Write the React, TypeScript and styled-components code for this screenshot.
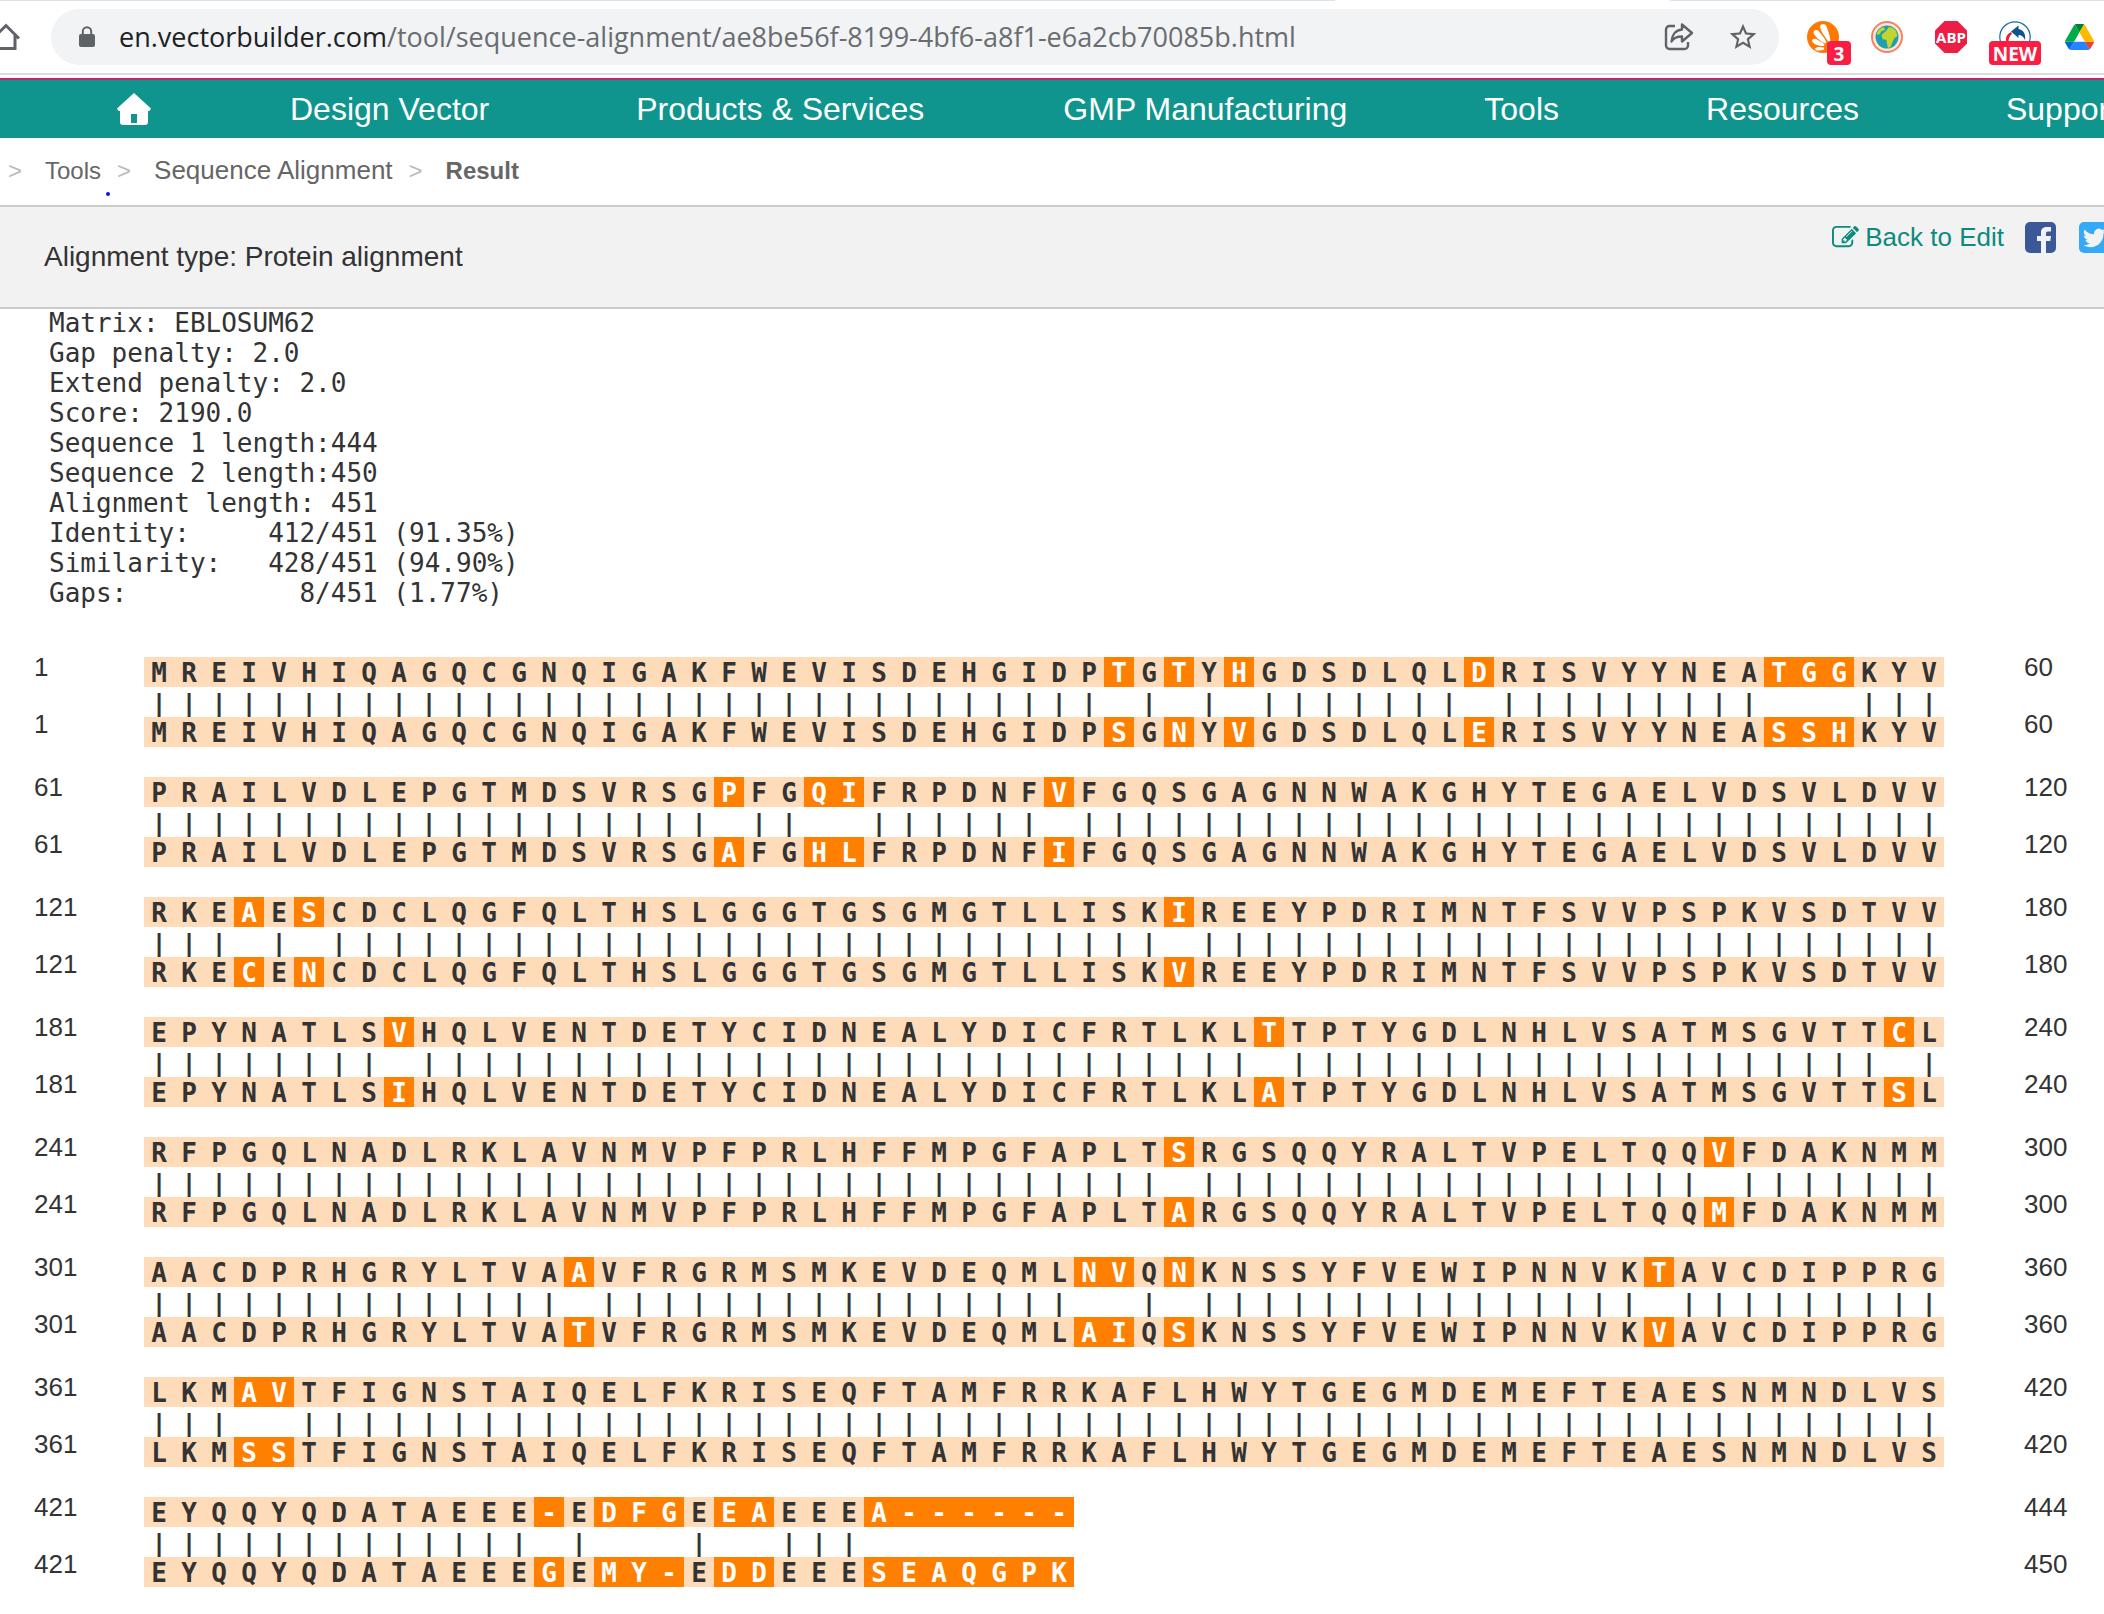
import React from "react";
import styled, { createGlobalStyle } from "styled-components";

const GlobalStyle = createGlobalStyle`
  * { box-sizing: border-box; }
  body {
    margin: 0;
    background: #fff;
    color: #333;
    font-family: "Liberation Sans", Arial, sans-serif;
    overflow-x: hidden;
  }
`;

const Page = styled.div`
  display: flex;
  flex-direction: column;
  overflow: hidden;
`;

/* ---------- browser toolbar ---------- */

const Toolbar = styled.header`
  display: flex;
  align-items: center;
  height: 75px;
  border-bottom: 2px solid #dadcdd;
  background:
    linear-gradient(#dee1e6, #dee1e6) 0 0 / 1335px 1px no-repeat,
    linear-gradient(#dee1e6, #dee1e6) 1670px 0 / 100% 1px no-repeat,
    #fff;
`;

const IconButton = styled.button`
  display: flex;
  align-items: center;
  justify-content: center;
  flex: none;
  position: relative;
  width: 32px;
  height: 32px;
  padding: 0;
  border: 0;
  background: none;
  color: #5f6368;
`;

const HomeButton = styled(IconButton)`
  width: 42px;
  margin: 0 24px 0 -15px;
`;

const AddressBar = styled.div`
  display: flex;
  align-items: center;
  flex: 1;
  height: 56px;
  padding: 0 20px 0 28px;
  border-radius: 28px;
  background: #f1f3f4;
`;

const Url = styled.div`
  flex: 1;
  margin-left: 24px;
  font: 27px/36px "Open Sans", "Noto Sans", sans-serif;
  color: #696c70;
  white-space: nowrap;
`;

const Host = styled.span`
  color: #202124;
`;

const AddressActions = styled.div`
  display: flex;
  gap: 32px;
`;

const Extensions = styled.div`
  display: flex;
  gap: 32px;
  padding: 0 9px 0 28px;
`;

const Badge = styled.span<{ $wide?: boolean }>`
  position: absolute;
  top: 20px;
  left: ${(p) => (p.$wide ? "-10px" : "20px")};
  width: ${(p) => (p.$wide ? "52px" : "24px")};
  height: 24px;
  border-radius: 4px;
  background: #fa1e44;
  color: #fff;
  font: 700 19px/26px "Open Sans", "Noto Sans", sans-serif;
  text-align: center;
`;

/* ---------- site navigation ---------- */

const SiteNav = styled.nav`
  display: flex;
  align-items: center;
  height: 63px;
  padding: 2px 0 0 117px;
  border-top: 3px solid #fff;
  background:
    linear-gradient(#c02670, #c02670) 0 0 / 100% 2px no-repeat,
    #0f958e;
  overflow: hidden;
`;

const HomeLink = styled.a`
  display: flex;
  color: #fff;
`;

const NavLink = styled.a<{ $before: number }>`
  flex: none;
  margin-left: ${(p) => p.$before}px;
  color: #fff;
  font-size: 32px;
  line-height: 40px;
  text-decoration: none;
  white-space: nowrap;
`;

/* ---------- breadcrumb ---------- */

const Breadcrumb = styled.nav`
  position: relative;
  display: flex;
  align-items: baseline;
  height: 67px;
  padding: 15px 8px;
  font-size: 24px;
  line-height: 34px;
  color: #666;
`;

const Crumb = styled.a<{ $large?: boolean }>`
  margin-right: 16px;
  color: #666;
  font-size: ${(p) => (p.$large ? 26 : 24)}px;
  text-decoration: none;
`;

const Separator = styled.span`
  margin-right: 23px;
  color: #bbb;
`;

const InkDot = styled.i`
  position: absolute;
  left: 106px;
  top: 54px;
  width: 4px;
  height: 4px;
  border-radius: 2px;
  background: #1010f0;
`;

/* ---------- title band ---------- */

const TitleBand = styled.section`
  display: flex;
  justify-content: space-between;
  height: 104px;
  padding-left: 44px;
  border-top: 2px solid #ccc;
  border-bottom: 2px solid #ccc;
  background: #f2f2f2;
`;

const Title = styled.h1`
  margin: 0;
  font-size: 28px;
  font-weight: 400;
  line-height: 100px;
`;

const Actions = styled.div`
  display: flex;
  align-items: center;
  height: 60px;
  margin-right: -6px;
`;

const BackLink = styled.a`
  display: flex;
  align-items: center;
  gap: 6px;
  margin-right: 21px;
  color: #0b8a80;
  font-size: 26px;
  line-height: 30px;
  text-decoration: none;
`;

const ShareLink = styled.a`
  display: flex;
  & + & { margin-left: 23px; }
`;

/* ---------- results ---------- */

const Summary = styled.pre`
  margin: -1px 0 0;
  padding: 0 49px 31px;
  font: 26px/30px "DejaVu Sans Mono", monospace;
`;

const Alignment = styled.main`
  display: flex;
  flex-direction: column;
`;

const Block = styled.section`
  display: flex;
  justify-content: space-between;
  height: 120px;
  padding: 0 30px 0 34px;
`;

const Positions = styled.div`
  display: flex;
  flex-direction: column;
  flex: none;
  width: 50px;
  font-size: 26px;
  line-height: 57px;
`;

const Strips = styled.div`
  flex: 1;
  padding: 18px 0 0 60px;
  font: 700 26px/30px "DejaVu Sans Mono", monospace;
`;

const Strip = styled.div`
  display: flex;
  height: 30px;
`;

const Cell = styled.span`
  width: 30px;
  padding-top: 1px;
  text-align: center;
`;

const Residue = styled(Cell)<{ $differs: boolean }>`
  background: ${(p) => (p.$differs ? "#ff8000" : "#ffdcb9")};
  color: ${(p) => (p.$differs ? "#fff" : "#333")};
`;

const Match = styled(Cell)`
  padding-top: 2px;
`;

type Pair = { start: number; ends: [number, number]; top: string; bottom: string };

const pairs: Pair[] = [
  {
    start: 1, ends: [60, 60],
    top: "MREIVHIQAGQCGNQIGAKFWEVISDEHGIDPTGTYHGDSDLQLDRISVYYNEATGGKYV",
    bottom: "MREIVHIQAGQCGNQIGAKFWEVISDEHGIDPSGNYVGDSDLQLERISVYYNEASSHKYV",
  },
  {
    start: 61, ends: [120, 120],
    top: "PRAILVDLEPGTMDSVRSGPFGQIFRPDNFVFGQSGAGNNWAKGHYTEGAELVDSVLDVV",
    bottom: "PRAILVDLEPGTMDSVRSGAFGHLFRPDNFIFGQSGAGNNWAKGHYTEGAELVDSVLDVV",
  },
  {
    start: 121, ends: [180, 180],
    top: "RKEAESCDCLQGFQLTHSLGGGTGSGMGTLLISKIREEYPDRIMNTFSVVPSPKVSDTVV",
    bottom: "RKECENCDCLQGFQLTHSLGGGTGSGMGTLLISKVREEYPDRIMNTFSVVPSPKVSDTVV",
  },
  {
    start: 181, ends: [240, 240],
    top: "EPYNATLSVHQLVENTDETYCIDNEALYDICFRTLKLTTPTYGDLNHLVSATMSGVTTCL",
    bottom: "EPYNATLSIHQLVENTDETYCIDNEALYDICFRTLKLATPTYGDLNHLVSATMSGVTTSL",
  },
  {
    start: 241, ends: [300, 300],
    top: "RFPGQLNADLRKLAVNMVPFPRLHFFMPGFAPLTSRGSQQYRALTVPELTQQVFDAKNMM",
    bottom: "RFPGQLNADLRKLAVNMVPFPRLHFFMPGFAPLTARGSQQYRALTVPELTQQMFDAKNMM",
  },
  {
    start: 301, ends: [360, 360],
    top: "AACDPRHGRYLTVAAVFRGRMSMKEVDEQMLNVQNKNSSYFVEWIPNNVKTAVCDIPPRG",
    bottom: "AACDPRHGRYLTVATVFRGRMSMKEVDEQMLAIQSKNSSYFVEWIPNNVKVAVCDIPPRG",
  },
  {
    start: 361, ends: [420, 420],
    top: "LKMAVTFIGNSTAIQELFKRISEQFTAMFRRKAFLHWYTGEGMDEMEFTEAESNMNDLVS",
    bottom: "LKMSSTFIGNSTAIQELFKRISEQFTAMFRRKAFLHWYTGEGMDEMEFTEAESNMNDLVS",
  },
  {
    start: 421, ends: [444, 450],
    top: "EYQQYQDATAEEE-EDFGEEAEEEA------",
    bottom: "EYQQYQDATAEEEGEMY-EDDEEESEAQGPK",
  },
];

const summary = `Matrix: EBLOSUM62
Gap penalty: 2.0
Extend penalty: 2.0
Score: 2190.0
Sequence 1 length:444
Sequence 2 length:450
Alignment length: 451
Identity:     412/451 (91.35%)
Similarity:   428/451 (94.90%)
Gaps:           8/451 (1.77%)`;

function Residues({ own, other }: { own: string; other: string }) {
  return (
    <Strip>
      {[...own].map((letter, i) => (
        <Residue key={i} $differs={letter !== other[i]}>{letter}</Residue>
      ))}
    </Strip>
  );
}

function AlignmentBlock({ start, ends, top, bottom }: Pair) {
  return (
    <Block>
      <Positions>
        <span>{start}</span>
        <span>{start}</span>
      </Positions>
      <Strips>
        <Residues own={top} other={bottom} />
        <Strip>
          {[...top].map((letter, i) => (
            <Match key={i}>{letter === bottom[i] ? "|" : ""}</Match>
          ))}
        </Strip>
        <Residues own={bottom} other={top} />
      </Strips>
      <Positions>
        <span>{ends[0]}</span>
        <span>{ends[1]}</span>
      </Positions>
    </Block>
  );
}

/* ---------- drawings ---------- */

const HomeOutline = () => (
  <svg width="30" height="28" viewBox="0 0 30 28" fill="none" stroke="currentColor" strokeWidth="3">
    <path d="M2 15.500 15 2.500 28 15.500M6 12v13.500h18V12" />
  </svg>
);

const Lock = () => (
  <svg width="16" height="22" viewBox="0 0 16 22">
    <rect y="8" width="16" height="13" rx="2" fill="#5f6368" />
    <path d="M3.800 9V5.500a4.200 4.200 0 0 1 8.400 0V9" fill="none" stroke="#5f6368" strokeWidth="2" />
  </svg>
);

const Share = () => (
  <svg width="30" height="30" viewBox="0 0 30 30" fill="none" stroke="currentColor" strokeWidth="2.400" strokeLinejoin="round">
    <path d="M11 4H5.500A3.500 3.500 0 0 0 2 7.500v16A3.500 3.500 0 0 0 5.500 27h15a3.500 3.500 0 0 0 3.500-3.500V20" />
    <path d="M18 2.500l10 8.500-10 8.500v-5c-5 0-8.500 1.500-10.500 5C8 13 11.500 8 18 7.500z" />
  </svg>
);

const Star = () => (
  <svg width="34" height="34" viewBox="0 0 24 24" fill="currentColor">
    <path d="M22 9.240l-7.190-.62L12 2 9.190 8.630 2 9.240l5.460 4.730L5.820 21 12 17.270 18.180 21l-1.630-7.030L22 9.240zM12 15.400l-3.760 2.270 1-4.280-3.320-2.880 4.380-.38L12 6.100l1.710 4.040 4.380.38-3.320 2.880 1 4.280L12 15.400z" />
  </svg>
);

const Avast = () => (
  <svg width="32" height="32" viewBox="0 0 32 32">
    <circle cx="16" cy="16" r="16" fill="#ff7800" />
    <g fill="#fff">
      <path d="M13 6c0-3.500 5-4 6.500-.5 1.500 4 3.500 9 4 15l-2 .5C18 16 13.500 10 13 6z" />
      <path d="M6.500 11.500c0-3 4-3.500 6-.5 2.500 3 5.500 7 7 10.500l-1.500 1C13 20 7 15 6.500 11.500z" />
      <path d="M5 20c0-2.500 3-3 5-1.500 3 1.500 5.500 3 7.500 5l-1 1.500C12 25 5.500 23 5 20z" />
      <path d="M8 28c1.500-2.500 5-2 9-1.500v2c-4 1.500-8 1.500-9-.5z" />
    </g>
  </svg>
);

const Globe = () => (
  <svg width="32" height="32" viewBox="0 0 32 32">
    <circle cx="16" cy="16" r="15" fill="#fde6d8" stroke="#f58262" strokeWidth="2" />
    <circle cx="16" cy="16" r="11.500" fill="#1f9fae" />
    <path d="M6 12c1-3 4-5.500 7-6l1 3-4 1.500L9 13l-3 1zM15 10l3-4 4 1 3 3 1.500 5-3 2-2 4-2 5-2.500 1-1-4-.5-4-4-1-1-4z" fill="#c3d52c" />
  </svg>
);

const AdBlock = () => (
  <svg width="32" height="32" viewBox="0 0 32 32">
    <path d="M9.500 0h13L32 9.500v13L22.500 32h-13L0 22.500v-13z" fill="#ed1e45" />
    <text x="16" y="22" fill="#fff" fontFamily="Open Sans, sans-serif" fontWeight="700" fontSize="15" textAnchor="middle">ABP</text>
  </svg>
);

const Returner = () => (
  <svg width="32" height="32" viewBox="0 0 32 32">
    <circle cx="16" cy="16" r="15.200" fill="#fff" stroke="#1b6ea0" strokeWidth="1.200" />
    <path d="M12 10.500l7.500-6v3.500c5 1 7.500 5 6.500 11-1.500-3.500-3.500-5-6.500-5v3z" fill="#0b5490" />
    <path d="M12 11c-4.500 2.500-6 6-4.500 10h2c0-3.500 1-6 3.500-8z" fill="#e3222b" />
  </svg>
);

const Drive = () => (
  <svg width="29" height="26" viewBox="0 0 87.300 78">
    <path d="m6.600 66.850 3.850 6.650c.8 1.400 1.950 2.500 3.300 3.300l13.750-23.800h-27.500c0 1.550.4 3.100 1.200 4.500z" fill="#0066da" />
    <path d="m43.650 25-13.750-23.800c-1.350.8-2.500 1.900-3.300 3.300l-25.400 44a9.060 9.060 0 0 0-1.200 4.500h27.500z" fill="#00ac47" />
    <path d="m73.550 76.800c1.350-.8 2.500-1.900 3.300-3.300l1.600-2.750 7.650-13.250c.8-1.400 1.200-2.950 1.200-4.500h-27.502l5.852 11.500z" fill="#ea4335" />
    <path d="m43.650 25 13.750-23.800c-1.350-.8-2.900-1.200-4.500-1.200h-18.500c-1.600 0-3.150.45-4.500 1.200z" fill="#00832d" />
    <path d="m59.800 53h-32.300l-13.750 23.800c1.350.8 2.900 1.200 4.500 1.200h50.800c1.600 0 3.150-.45 4.500-1.200z" fill="#2684fc" />
    <path d="m73.400 26.500-12.700-22c-.8-1.400-1.950-2.500-3.300-3.300l-13.750 23.800 16.150 28h27.450c0-1.550-.4-3.100-1.200-4.500z" fill="#ffba00" />
  </svg>
);

const HomeSolid = () => (
  <svg width="34" height="32" viewBox="0 0 34 32">
    <path fill="currentColor" d="M17 0l17 15.500-1.500 2.500H31v11a3 3 0 0 1-3 3H6a3 3 0 0 1-3-3V18H1.500L0 15.500z" />
    <rect x="14" y="21" width="6" height="9" fill="#0f958e" />
  </svg>
);

const EditIcon = () => (
  <svg width="27" height="27" viewBox="0 0 1792 1792" fill="currentColor">
    <path d="M888 1184l116-116-152-152-116 116v56h96v96h56zm440-720q-16-16-33 1l-350 350q-17 17-1 33t33-1l350-350q17-17 1-33zm80 594v190q0 119-84.500 203.500t-203.500 84.500h-832q-119 0-203.500-84.500t-84.500-203.500v-832q0-119 84.500-203.500t203.500-84.500h832q63 0 117 25 15 7 18 23 3 17-9 29l-49 49q-14 14-32 8-23-6-45-6h-832q-66 0-113 47t-47 113v832q0 66 47 113t113 47h832q66 0 113-47t47-113v-126q0-13 9-22l64-64q15-15 35-7t20 29zm-96-738l288 288-672 672h-288v-288zm444 132l-92 92-288-288 92-92q28-28 68-28t68 28l152 152q28 28 28 68t-28 68z" />
  </svg>
);

const Facebook = () => (
  <svg width="31" height="31" viewBox="0 0 31 31">
    <rect width="31" height="31" rx="5" fill="#3b5998" />
    <path d="M16 31V19h-4v-5h4v-3.500C16 6.500 18.500 5 22 5h4v4.500h-3c-1.500 0-2 .7-2 2V14h5l-.7 5H21v12z" fill="#f2f2f2" />
  </svg>
);

const Twitter = () => (
  <svg width="31" height="31" viewBox="0 0 31 31">
    <rect width="31" height="31" rx="5" fill="#33a9f8" />
    <path transform="translate(4 4.500) scale(.95)" d="M23.950 4.570a10 10 0 0 1-2.820.77 4.960 4.960 0 0 0 2.160-2.720c-.95.550-2 .95-3.130 1.180a4.920 4.920 0 0 0-8.380 4.480C7.690 8.090 4.070 6.130 1.640 3.160a4.920 4.920 0 0 0 1.520 6.570 4.900 4.900 0 0 1-2.230-.61v.060c0 2.380 1.700 4.370 3.950 4.830a5 5 0 0 1-2.210.08 4.940 4.940 0 0 0 4.600 3.420A9.870 9.870 0 0 1 0 19.540a13.990 13.990 0 0 0 7.550 2.210c9.050 0 14-7.500 14-13.980 0-.21 0-.42-.02-.63a9.940 9.940 0 0 0 2.460-2.550z" fill="#f2f2f2" />
  </svg>
);

export default function App() {
  return (
    <Page>
      <GlobalStyle />
      <Toolbar>
        <HomeButton aria-label="Home"><HomeOutline /></HomeButton>
        <AddressBar>
          <Lock />
          <Url>
            <Host>en.vectorbuilder.com</Host>
            /tool/sequence-alignment/ae8be56f-8199-4bf6-a8f1-e6a2cb70085b.html
          </Url>
          <AddressActions>
            <IconButton aria-label="Share"><Share /></IconButton>
            <IconButton aria-label="Bookmark"><Star /></IconButton>
          </AddressActions>
        </AddressBar>
        <Extensions>
          <IconButton aria-label="Avast"><Avast /><Badge>3</Badge></IconButton>
          <IconButton aria-label="Globe"><Globe /></IconButton>
          <IconButton aria-label="Adblock Plus"><AdBlock /></IconButton>
          <IconButton aria-label="Returner"><Returner /><Badge $wide>NEW</Badge></IconButton>
          <IconButton aria-label="Drive"><Drive /></IconButton>
        </Extensions>
      </Toolbar>

      <SiteNav>
        <HomeLink href="#" aria-label="Home page"><HomeSolid /></HomeLink>
        <NavLink href="#" $before={139}>Design Vector</NavLink>
        <NavLink href="#" $before={147}>Products &amp; Services</NavLink>
        <NavLink href="#" $before={139}>GMP Manufacturing</NavLink>
        <NavLink href="#" $before={137}>Tools</NavLink>
        <NavLink href="#" $before={147}>Resources</NavLink>
        <NavLink href="#" $before={147}>Support</NavLink>
      </SiteNav>

      <Breadcrumb aria-label="Breadcrumb">
        <Separator>&gt;</Separator>
        <Crumb href="#">Tools</Crumb>
        <Separator>&gt;</Separator>
        <Crumb href="#" $large>Sequence Alignment</Crumb>
        <Separator>&gt;</Separator>
        <strong>Result</strong>
        <InkDot />
      </Breadcrumb>

      <TitleBand>
        <Title>Alignment type: Protein alignment</Title>
        <Actions>
          <BackLink href="#"><EditIcon />Back to Edit</BackLink>
          <ShareLink href="#" aria-label="Share on Facebook"><Facebook /></ShareLink>
          <ShareLink href="#" aria-label="Share on Twitter"><Twitter /></ShareLink>
        </Actions>
      </TitleBand>

      <Summary>{summary}</Summary>

      <Alignment>
        {pairs.map((pair) => <AlignmentBlock key={pair.start} {...pair} />)}
      </Alignment>
    </Page>
  );
}
